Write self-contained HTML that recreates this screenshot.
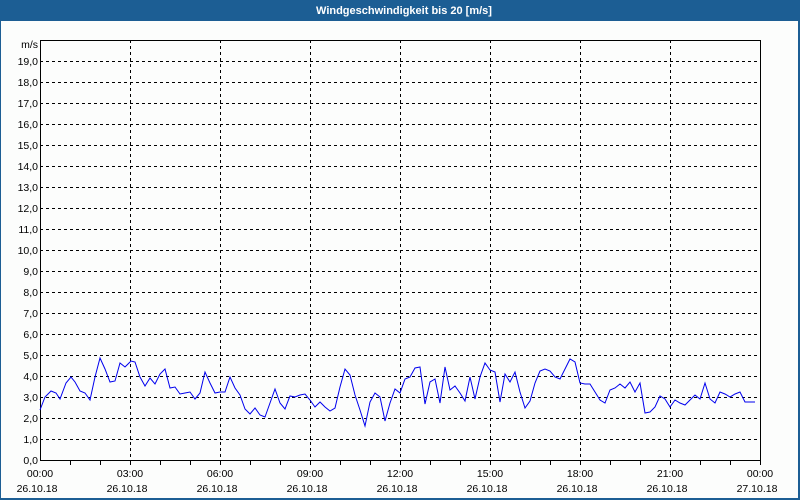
<!DOCTYPE html>
<html><head><meta charset="utf-8"><style>
html,body{margin:0;padding:0;background:#fff}
svg{display:block}
text{font-family:"Liberation Sans",sans-serif;font-size:10.5px;fill:#000}
</style></head><body>
<svg width="800" height="500" viewBox="0 0 800 500" xmlns="http://www.w3.org/2000/svg">
<rect x="0" y="0" width="800" height="500" fill="#1c5e94"/>
<rect x="1" y="21" width="797" height="477" fill="#fcfdfc"/>
<text x="404" y="14" text-anchor="middle" style="fill:#fff;font-weight:bold;font-size:11px">Windgeschwindigkeit bis 20 [m/s]</text>
<g stroke="#000" stroke-width="1" stroke-dasharray="3,3" shape-rendering="crispEdges">
<path d="M40 439.5H760M40 418.5H760M40 397.5H760M40 376.5H760M40 355.5H760M40 334.5H760M40 313.5H760M40 292.5H760M40 271.5H760M40 250.5H760M40 229.5H760M40 208.5H760M40 187.5H760M40 166.5H760M40 145.5H760M40 124.5H760M40 103.5H760M40 82.5H760M40 61.5H760"/>
<path d="M130.5 40V460M220.5 40V460M310.5 40V460M400.5 40V460M490.5 40V460M580.5 40V460M670.5 40V460"/>
</g>
<g stroke="#000" stroke-width="1" shape-rendering="crispEdges" fill="none">
<rect x="40.5" y="40.5" width="720" height="420"/>
<path d="M70.5 460v5M100.5 460v5M130.5 460v5M160.5 460v5M190.5 460v5M220.5 460v5M250.5 460v5M280.5 460v5M310.5 460v5M340.5 460v5M370.5 460v5M400.5 460v5M430.5 460v5M460.5 460v5M490.5 460v5M520.5 460v5M550.5 460v5M580.5 460v5M610.5 460v5M640.5 460v5M670.5 460v5M700.5 460v5M730.5 460v5M760.5 460v5"/>
</g>
<polyline fill="none" stroke="#0000ee" stroke-width="1" points="40,410 45,397 51,391 56,393 60,399 66,383 71,377 75,382 80,391 85,393 90,400 95,377 100,358 105,369 110,382 115,381 120,363 125,367 131,361 135,362 140,377 145,386 150,378 155,384 160,374 165,369 170,388 175,387 180,394 185,393 190,392 195,399 200,393 205,372 210,383 215,393 220,392 225,392 230,377 235,388 240,395 245,409 250,414 255,408 260,415 265,417 270,403 275,389 280,403 285,409 290,396 295,397 300,395 305,394 310,400 315,407 320,402 325,407 330,411 335,408 340,387 345,369 350,375 355,395 360,410 365,426 370,402 375,393 380,397 385,421 390,403 395,389 400,393 405,379 410,377 415,368 420,367 425,404 430,382 435,379 440,403 445,367 450,390 455,386 460,393 465,401 470,377 475,399 480,377 485,363 490,370 495,372 500,402 505,374 510,382 515,372 520,392 525,408 530,401 535,383 540,371 545,369 550,371 555,377 560,379 565,369 570,359 575,362 580,383 585,384 590,384 595,392 600,400 605,403 610,390 615,388 620,384 625,388 630,382 635,392 640,383 645,413 650,412 655,407 660,396 665,399 670,407 675,400 680,403 685,405 690,400 695,395 700,399 705,383 710,399 715,403 720,392 725,394 730,397 735,394 740,392 745,402 750,402 755,402"/>
<g text-anchor="end">
<text x="38" y="48">m/s</text>
<text x="38" y="65">19,0</text><text x="38" y="86">18,0</text><text x="38" y="107">17,0</text><text x="38" y="128">16,0</text><text x="38" y="149">15,0</text><text x="38" y="170">14,0</text><text x="38" y="191">13,0</text><text x="38" y="212">12,0</text><text x="38" y="233">11,0</text><text x="38" y="254">10,0</text><text x="38" y="275">9,0</text><text x="38" y="296">8,0</text><text x="38" y="317">7,0</text><text x="38" y="338">6,0</text><text x="38" y="359">5,0</text><text x="38" y="380">4,0</text><text x="38" y="401">3,0</text><text x="38" y="422">2,0</text><text x="38" y="443">1,0</text><text x="38" y="464">0,0</text>
</g>
<g text-anchor="middle">
<text x="40" y="477">00:00</text><text x="130" y="477">03:00</text><text x="220" y="477">06:00</text><text x="310" y="477">09:00</text><text x="400" y="477">12:00</text><text x="490" y="477">15:00</text><text x="580" y="477">18:00</text><text x="670" y="477">21:00</text><text x="760" y="477">00:00</text>
<text x="37" y="492">26.10.18</text><text x="127" y="492">26.10.18</text><text x="217" y="492">26.10.18</text><text x="307" y="492">26.10.18</text><text x="397" y="492">26.10.18</text><text x="487" y="492">26.10.18</text><text x="577" y="492">26.10.18</text><text x="667" y="492">26.10.18</text><text x="757" y="492">27.10.18</text>
</g>
</svg>
</body></html>
